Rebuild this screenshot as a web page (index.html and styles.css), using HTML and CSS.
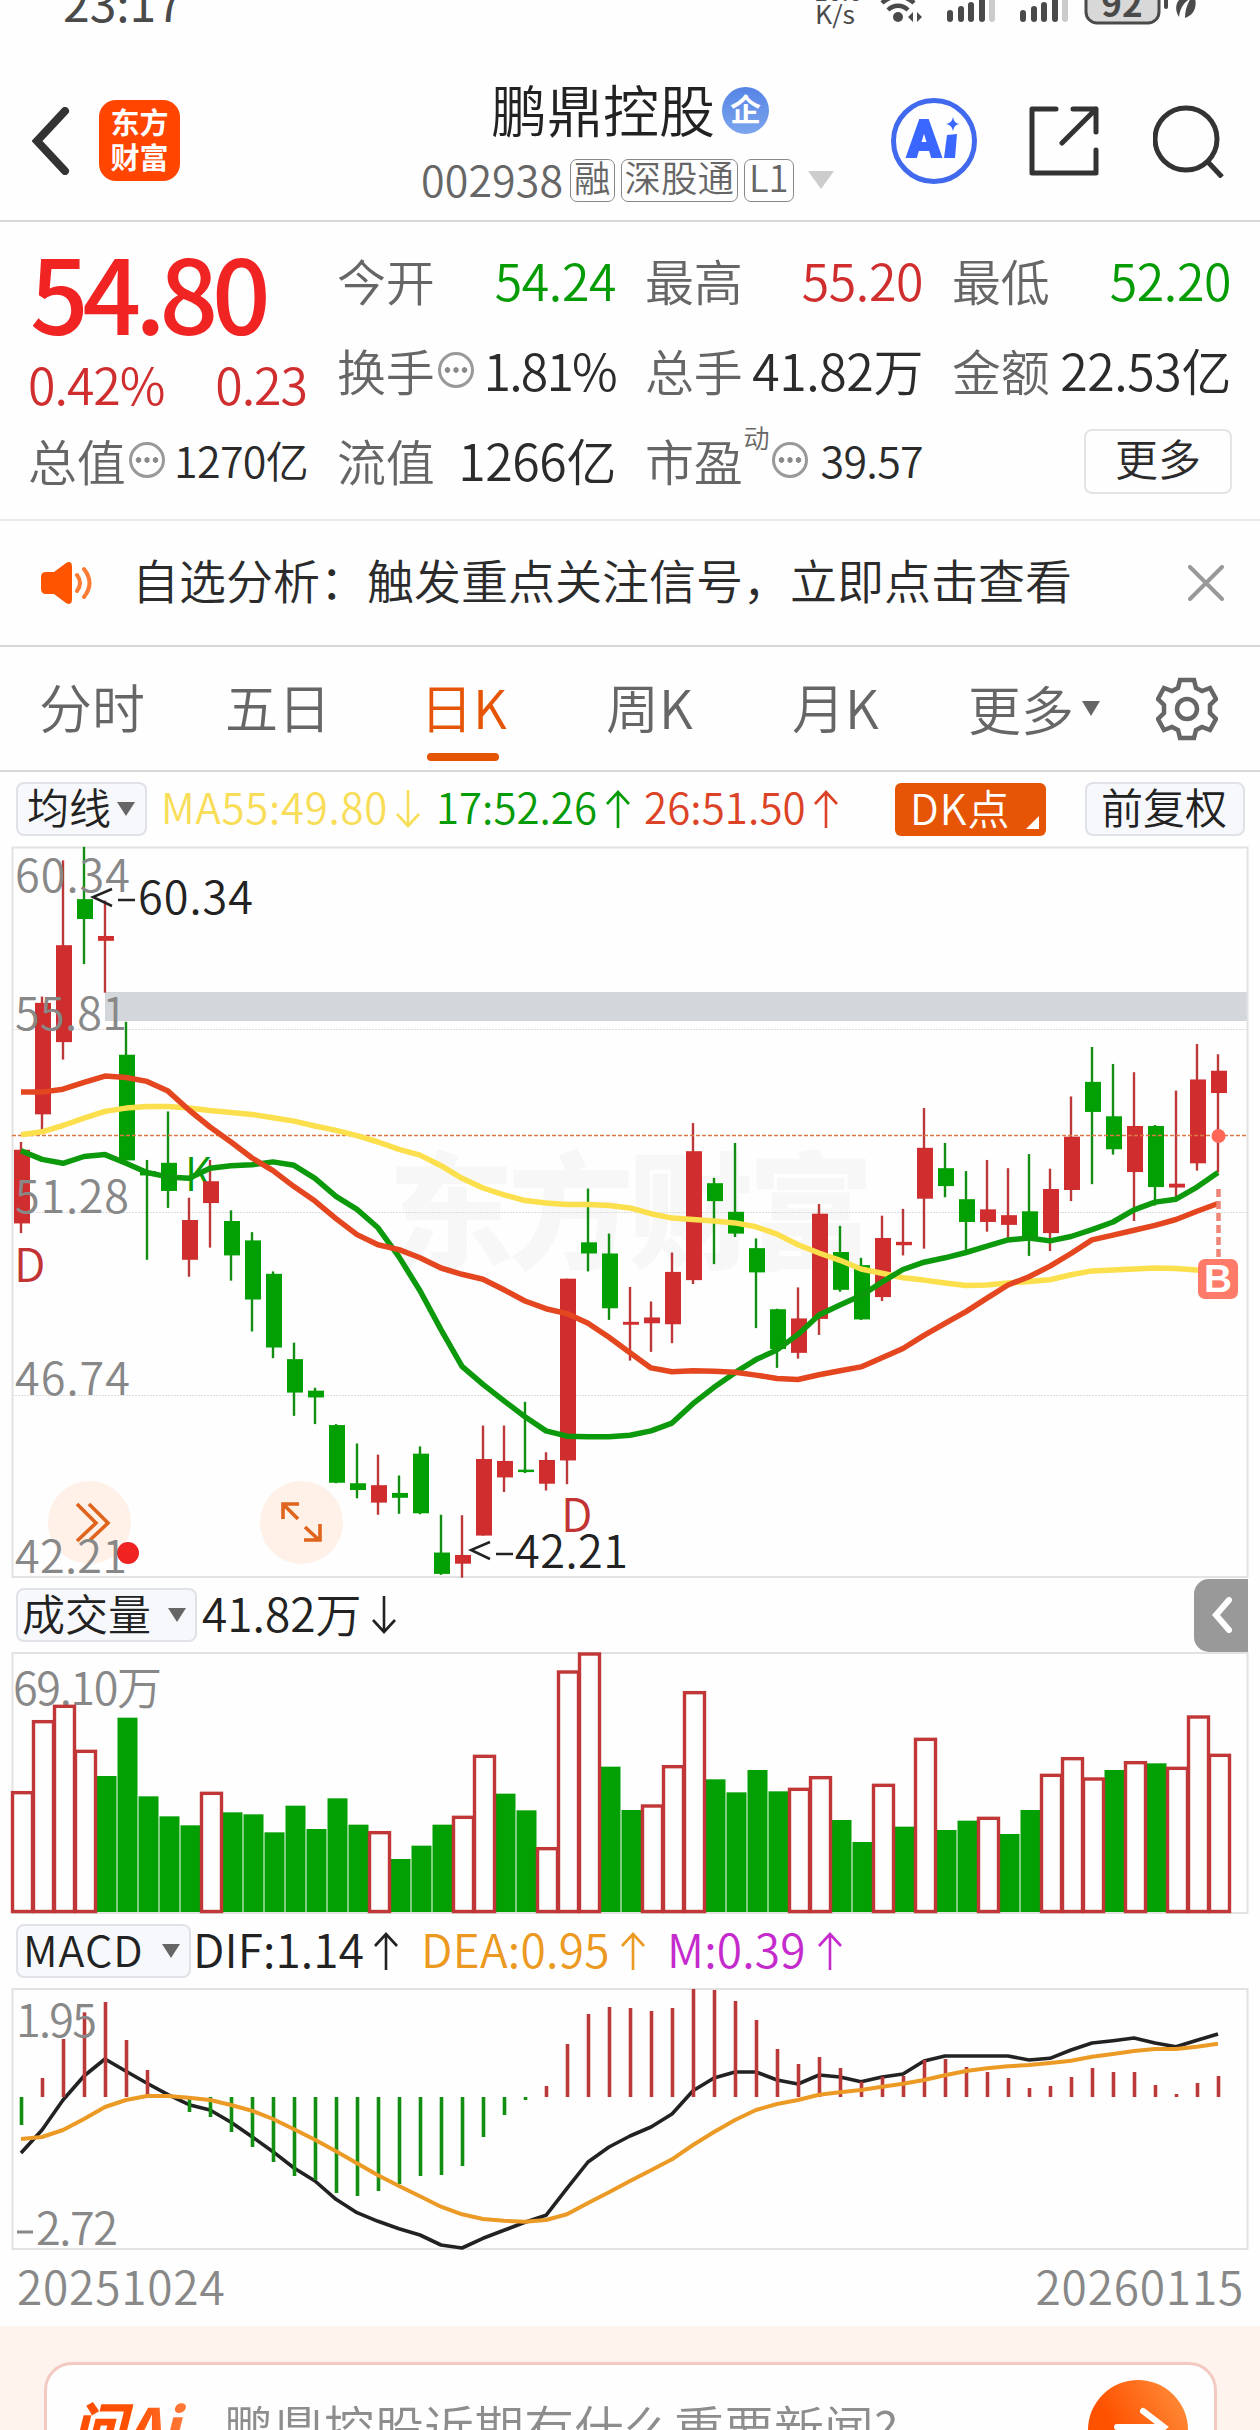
FILE: index.html
```html
<!DOCTYPE html>
<html lang="zh-CN">
<head>
<meta charset="UTF-8" />
<title>鹏鼎控股 002938</title>
<link rel="stylesheet" href="styles.css">
</head>
<body>
<div class="status-bar">
  <span class="time">23:17</span>
  <svg class="status-icons" width="400" height="30" viewBox="0 0 400 30">
    <text x="14" y="1" class="net">10.0</text>
    <text x="15" y="24" class="net" textLength="40" lengthAdjust="spacingAndGlyphs">K/s</text>
    <circle cx="98" cy="17" r="5" />
    <path d="M88 10a14 14 0 0 1 20 0M82 3a23 23 0 0 1 32 0" fill="none" stroke="#4a4a4a" stroke-width="4.5" />
    <path d="M113 12v10l-5-5zM117 12v10l5-5z" />
    <g id="signal">
      <rect x="147" y="10" width="6" height="12" rx="3" />
      <rect x="158" y="6" width="6" height="16" rx="3" />
      <rect x="168" y="2" width="6" height="20" rx="3" />
      <rect x="179" y="-4" width="6" height="26" rx="3" />
      <rect x="189" y="-8" width="6" height="30" rx="3" fill="#cbcbcb" />
    </g>
    <use href="#signal" x="73" />
    <rect x="286" y="-20" width="73" height="43" rx="11" fill="#d8d8d8" stroke="#4a4a4a" stroke-width="3" />
    <rect x="364" y="-6" width="4" height="15" rx="2" />
    <text x="322" y="17" class="battery">92</text>
    <path d="M379 17c-6-10-3-20 14-25 6 14 1 23-8 26 0-7 2-14 6-20-8 5-11 11-12 19z" />
  </svg>
</div>

<header class="header">
  <svg class="back" width="38" height="68" viewBox="0 0 38 68"><path d="M33 4L5 34l28 30" /></svg>
  <div class="logo"><span>东方</span><span>财富</span></div>
  <div class="title">
    <div class="name">鹏鼎控股<span class="badge">企</span></div>
    <div class="code">
      <span class="num">002938</span>
      <span class="tag">融</span>
      <span class="tag">深股通</span>
      <span class="tag l1">L1</span>
      <svg class="more-arrow" width="26" height="18" viewBox="0 0 26 18"><path d="M0 0h26L13 18z" /></svg>
    </div>
  </div>
  <svg class="ai" width="86" height="86" viewBox="0 0 86 86">
    <circle cx="43" cy="43" r="40.5" />
    <text x="16" y="59" textLength="34" lengthAdjust="spacingAndGlyphs">A</text>
    <path d="M56 37l10-1-2 24H53zM62 19q1 6 6 7-5 1-6 7-1-6-7-7 6-1 7-7z" />
  </svg>
  <svg class="share" width="70" height="70" viewBox="0 0 70 70"><path d="M27 3H3v64h64V44M44 3h23v23M67 3L33 37" /></svg>
  <svg class="search" width="72" height="74" viewBox="0 0 72 74"><circle cx="33" cy="35" r="31" /><path d="M55 58l14 15" /></svg>
</header>

<section class="quote">
  <div class="quote-main">
    <div class="price">54.80</div>
    <div class="change"><span>0.42%</span><span>0.23</span></div>
  </div>
  <div class="cell"><label>今开</label><b class="down">54.24</b></div>
  <div class="cell"><label>最高</label><b class="up">55.20</b></div>
  <div class="cell"><label>最低</label><b class="down">52.20</b></div>
  <div class="cell"><label>换手<i class="tip"></i></label><b class="rate">1.81%</b></div>
  <div class="cell"><label>总手</label><b>41.82万</b></div>
  <div class="cell"><label>金额</label><b>22.53亿</b></div>
  <div class="cell"><label>总值<i class="tip"></i></label><b class="small">1270亿</b></div>
  <div class="cell"><label>流值</label><b>1266亿</b></div>
  <div class="cell"><label>市盈<sup>动</sup><i class="tip"></i></label><b class="small">39.57</b></div>
  <div class="cell"><button class="more-btn">更多</button></div>
</section>

<section class="notice">
  <svg width="54" height="44" viewBox="0 0 54 44">
    <path d="M6 11h8L26 2q6-3 6 4v32q0 7-6 4L14 33H6q-5 0-5-5V16q0-5 5-5z" fill="#ff5500" />
    <path d="M37 14q6 8 0 16M44 8q11 14 0 28" fill="none" stroke="#ff7a33" stroke-width="4" stroke-linecap="round" />
  </svg>
  <span>自选分析：触发重点关注信号，立即点击查看</span>
  <svg class="close" width="36" height="36" viewBox="0 0 36 36"><path d="M2 2l32 32M34 2L2 34" /></svg>
</section>

<nav class="tabs">
  <a class="t1">分时</a>
  <a class="t2">五日</a>
  <a class="t3 active">日K</a>
  <a class="t4">周K</a>
  <a class="t5">月K</a>
  <a class="t6">更多<svg width="18" height="15" viewBox="0 0 18 15"><path d="M0 0h18L9 15z" fill="#666" /></svg></a>
  <svg class="gear" width="62" height="64" viewBox="0 0 62 64">
    <path d="M24 3h14l2 8 6 3 8-3 6 11-6 6v8l6 6-6 11-8-3-6 3-2 8H24l-2-8-6-3-8 3-6-11 6-6v-8l-6-6 6-11 8 3 6-3z" />
    <circle cx="31" cy="32" r="10" />
  </svg>
</nav>

<div class="bar ma-bar">
  <button class="pick ma-pick">均线<i class="tri"></i></button>
  <span class="val ma55"><em>MA55:49.80</em><svg class="arr dn"><use href="#arrow" /></svg></span>
  <span class="val ma17"><em>17:52.26</em><svg class="arr"><use href="#arrow" /></svg></span>
  <span class="val ma26"><em>26:51.50</em><svg class="arr"><use href="#arrow" /></svg></span>
  <button class="dk">DK点</button>
  <button class="pick adj">前复权</button>
</div>

<svg class="chart" id="kline" width="1260" height="732" viewBox="0 0 1260 732">
  <text x="388" y="413" class="watermark" textLength="486">东方财富</text>
  <path d="M12 183.5h1235M12 366.5h1235M12 549.5h1235" class="grid" />
  <rect x="105" y="146" width="1142" height="29" fill="#d3d6db" />
  <rect x="12.5" y="1.5" width="1235" height="729.5" class="frame" />
  <text x="185" y="345" class="kmark" textLength="27" lengthAdjust="spacingAndGlyphs">K</text>
  <g id="candles"></g>
  <path d="M12 289.5h1235" stroke="#dd7744" stroke-width="1.5" stroke-dasharray="4 2" />
  <g id="maLines"></g>
  <circle cx="89.5" cy="676.5" r="41.5" fill="#fff0e8" />
  <path d="M77 658l19 19-19 18M89 658l19 19-19 18" class="tool" />
  <circle cx="301.5" cy="676.5" r="41.5" fill="#fff0e8" />
  <path d="M283 673v-15h16M284 659l14 14M320 678v16h-16M305 681l14 13" class="tool" />
  <circle cx="128" cy="707" r="11" fill="#f02222" />
  <g class="axis">
    <text x="15" y="46" textLength="115">60.34</text>
    <text x="15" y="184" textLength="112">55.81</text>
    <text x="15" y="367" textLength="114">51.28</text>
    <text x="15" y="549" textLength="115">46.74</text>
    <text x="15" y="727" textLength="112">42.21</text>
  </g>
  <g class="mark">
    <path d="M112 43l-19 8 19 9M118 54h17M490 696l-19 8 19 9M496 708h17" />
    <text x="138" y="68" textLength="115">60.34</text>
    <text x="515" y="722" textLength="113">42.21</text>
  </g>
  <text x="14" y="436" class="dmark">D</text>
  <text x="561" y="686" class="dmark">D</text>
  <path d="M1218.5 343v69" stroke="#ee8577" stroke-width="4.5" stroke-dasharray="8 4" />
  <circle cx="1218.5" cy="290" r="7" fill="#ff6655" />
  <rect x="1198" y="413" width="40" height="40" rx="7" fill="#ff7b69" />
  <text x="1218" y="446" class="bmark" textLength="28" lengthAdjust="spacingAndGlyphs">B</text>
</svg>

<div class="bar vol-bar">
  <button class="pick vol-pick">成交量<i class="tri"></i></button>
  <span class="val v1"><em>41.82万</em><svg class="arr dn"><use href="#arrow" /></svg></span>
  <button class="fold"><svg width="20" height="36" viewBox="0 0 20 36"><path d="M17 3L4 18l13 15" /></svg></button>
</div>

<svg class="chart" width="1260" height="262" viewBox="0 0 1260 262">
  <rect x="12.5" y="1" width="1235" height="260" class="frame" />
  <text x="13" y="53" class="axis" textLength="149">69.10万</text>
  <g id="volume"></g>
</svg>

<div class="bar macd-bar">
  <button class="pick macd-pick"><em>MACD</em><i class="tri"></i></button>
  <span class="val dif"><em>DIF:1.14</em><svg class="arr"><use href="#arrow" /></svg></span>
  <span class="val dea"><em>DEA:0.95</em><svg class="arr"><use href="#arrow" /></svg></span>
  <span class="val m"><em>M:0.39</em><svg class="arr"><use href="#arrow" /></svg></span>
</div>

<svg class="chart" width="1260" height="262" viewBox="0 0 1260 262">
  <rect x="12.5" y="1" width="1235" height="260" class="frame" />
  <g id="macd"></g>
  <g class="axis">
    <text x="16" y="49" textLength="81">1.95</text>
    <path d="M17 244h16" />
    <text x="36" y="257" textLength="82">2.72</text>
  </g>
</svg>

<div class="dates"><span>20251024</span><span>20260115</span></div>

<footer class="ask">
  <div class="ask-box">
    <span class="ask-logo">问Ai</span>
    <span class="ask-text">鹏鼎控股近期有什么重要新闻?</span>
    <span class="ask-go"><svg width="60" height="60" viewBox="0 0 60 60"><path d="M5 28h46M31 12l21 16-21 16" /></svg></span>
  </div>
</footer>

<svg class="defs" width="0" height="0">
  <symbol id="arrow" viewBox="0 0 24 38"><path d="M12 38V2M1 14L12 2l11 12" fill="none" stroke="currentColor" stroke-width="2.6" /></symbol>
</svg>
<script src="script.js"></script>
</body>
</html>
```
FILE: styles.css
```css
:root {
  --red: #d02e2e;
  --green: #049b04;
  --orange: #e65505;
  --text: #2b2b2b;
  --gray: #666;
  --line: #d8d8d8;
}
* { box-sizing: border-box; }
body {
  margin: 0;
  width: 1260px;
  height: 2430px;
  overflow: hidden;
  background: #fefefe;
  color: var(--text);
  font-family: "Noto Sans CJK SC", "Noto Sans", sans-serif;
  font-weight: 350;
  line-height: 1;
}
button {
  font: inherit;
  color: inherit;
  padding: 0;
  border: none;
  background: none;
}
em, i { font-style: normal; }
svg { display: block; flex: none; }
.defs { position: absolute; }

/* Status bar */
.status-bar {
  height: 30px;
  display: flex;
  justify-content: space-between;
  padding: 0 60px 0 63px;
  overflow: hidden;
}
.time {
  font-size: 48px;
  font-weight: 400;
  line-height: 2px;
  color: #4a4a4a;
}
.status-icons { fill: #4a4a4a; }
.net { font-size: 25px; font-weight: 400; }
.battery {
  font-size: 35px;
  font-weight: 700;
  text-anchor: middle;
}

/* Header */
.header {
  height: 192px;
  display: flex;
  align-items: center;
  padding: 31px 34px 0 32px;
  border-bottom: 2px solid var(--line);
}
.header svg {
  fill: none;
  stroke: #333;
  stroke-width: 5;
}
.header .back { stroke-width: 8; stroke-linecap: round; }
.logo {
  flex: none;
  width: 81px;
  height: 81px;
  margin-left: 29px;
  border-radius: 17px;
  background: #ff4500;
  color: #fff;
  font-size: 29px;
  font-weight: 700;
  display: flex;
  flex-direction: column;
  align-items: center;
  justify-content: center;
  gap: 6px;
  padding-bottom: 4px;
}
.title {
  flex: none;
  width: 412px;
  margin-left: 241px;
  display: flex;
  flex-direction: column;
  align-items: center;
}
.name {
  font-size: 56px;
  display: flex;
  align-items: center;
  color: #222;
  margin-left: 6px;
}
.badge {
  width: 47px;
  height: 47px;
  margin: 6px 0 0 7px;
  border-radius: 50%;
  background: linear-gradient(#5684e6, #7ba5ec);
  color: #fff;
  font-size: 31px;
  font-weight: 700;
  line-height: 42px;
  text-align: center;
}
.code {
  width: 100%;
  margin-top: 23px;
  display: flex;
  align-items: center;
  font-size: 43px;
  color: var(--gray);
  white-space: nowrap;
}
.code .num { flex: none; width: 149px; letter-spacing: .1px; line-height: 34px; padding-bottom: 4px; }
.tag {
  flex: none;
  height: 43px;
  border: 1.5px solid #888;
  border-radius: 7px;
  padding: 0 3px;
  margin-right: 6px;
  font-size: 36.5px;
  line-height: 34px;
}
.tag.l1 { padding: 0 4px; }
.header .more-arrow { fill: #ccc; stroke: none; margin-left: 8px; }
.header .ai { margin-left: 58px; stroke: #4169ee; }
.ai text, .ai path { fill: #3a67ff; stroke: none; }
.ai text {
  font: 900 52px Roboto, sans-serif;
  stroke: #3a67ff;
  stroke-width: 2;
}
.header .share { margin-left: 52px; stroke-linejoin: round; stroke-linecap: round; }
.header .search { margin-left: 54px; }

/* Quote */
.quote {
  height: 299px;
  padding: 15px 28px 0;
  display: grid;
  grid-template-columns: 279px 278px 277px 278px;
  grid-template-rows: repeat(3, 90px);
  column-gap: 30px;
  border-bottom: 2px solid #ebebeb;
}
.quote-main { grid-row: 1 / 3; }
.price {
  font-size: 103px;
  font-weight: 500;
  letter-spacing: -6.2px;
  line-height: 107px;
  padding-left: 2px;
  color: #f12424;
}
.change {
  display: flex;
  justify-content: space-between;
  font-size: 50px;
  letter-spacing: -1px;
  line-height: 50px;
  color: var(--red);
  margin: 14px 0 0;
}
.cell {
  display: flex;
  align-items: center;
  justify-content: space-between;
  padding-bottom: 6px;
  white-space: nowrap;
}
.cell label {
  display: flex;
  align-items: center;
  font-size: 49px;
  letter-spacing: -.3px;
  color: var(--gray);
}
.cell b {
  font-size: 50px;
  font-weight: 350;
  letter-spacing: -.4px;
  margin-right: -1px;
}
.cell b.rate { letter-spacing: -1.8px; }
.cell b.small { font-size: 43px; letter-spacing: -.7px; }
.cell b.up { color: var(--red); }
.cell b.down { color: var(--green); }
.cell sup {
  font-size: 26px;
  align-self: flex-start;
  margin: -11px -1px 0 1px;
}
.tip {
  width: 36px;
  height: 36px;
  margin: 1px 0 0 4px;
  border: 3px solid #999;
  border-radius: 50%;
  background: radial-gradient(circle, #888 2.5px, transparent 3px) center / 8.5px 30px repeat-x content-box;
  padding: 0 2px;
}
.more-btn {
  width: 148px;
  height: 65px;
  margin: 4px -2px 0 auto;
  border: 2px solid #e4e4e4;
  border-radius: 8px;
  font-size: 43px;
  line-height: 50px;
  padding-bottom: 8px;
}

/* Notice */
.notice {
  height: 126px;
  display: flex;
  align-items: center;
  padding: 0 36px 0 40px;
  border-bottom: 2px solid var(--line);
  font-size: 47px;
}
.notice span { margin: -9px auto 0 38px; }
.close { stroke: #999; stroke-width: 4; stroke-linecap: round; }

/* Tabs */
.tabs {
  height: 125px;
  display: grid;
  grid-template-columns: 186px 195px 186px 186px 176px 188px 62px;
  align-items: center;
  padding-left: 39px;
  border-bottom: 2px solid var(--line);
  font-size: 53px;
  color: var(--gray);
}
.tabs a {
  height: 123px;
  line-height: 119px;
}
.tabs .active { color: var(--orange); }
.tabs .active::after {
  content: "";
  display: block;
  width: 72px;
  height: 8px;
  margin-top: -13px;
  margin-left: 7px;
  border-radius: 4px;
  background: var(--orange);
}
.tabs .t6 { display: flex; align-items: center; }
.t6 svg { margin-left: 8px; }
.gear { fill: none; stroke: var(--gray); stroke-width: 4.5; }

/* Indicator bars */
.bar {
  height: 74px;
  display: flex;
  align-items: center;
  padding-left: 16px;
}
.pick {
  flex: none;
  height: 54px;
  border: 2px solid #dfe2e6;
  border-radius: 8px;
  background: #f6f8fb;
  display: flex;
  align-items: center;
  justify-content: space-between;
  line-height: 44px;
  padding-bottom: 6px;
  color: #222;
}
.tri {
  margin-top: 5px;
  border: solid transparent;
  border-width: 14px 9px 0;
  border-top-color: #666;
}
.val { display: flex; align-items: center; }
.val em { line-height: 44px; padding-bottom: 6px; white-space: nowrap; }
.arr { width: 24px; height: 38px; }
.arr.dn { transform: rotate(180deg); }
.ma-bar { font-size: 42px; }
.ma-pick { width: 131px; padding-left: 9px; padding-right: 10px; }
.ma55 { width: 275px; margin-left: 14px; color: #f8dd58; }
.ma55 em { width: 235px; letter-spacing: .7px; }
.ma17 { width: 208px; color: var(--green); }
.ma17 em { width: 170px; letter-spacing: 0; }
.ma26 { width: 251px; color: #dc4326; }
.ma26 em { width: 170px; letter-spacing: .1px; }
.dk {
  position: relative;
  width: 151px;
  height: 53px;
  margin-top: 1px;
  border-radius: 6px;
  background: var(--orange);
  color: #fff;
  text-align: left;
  padding: 0 0 6px 15px;
  letter-spacing: 1px;
  line-height: 44px;
}
.dk::after {
  content: "";
  position: absolute;
  right: 7px;
  bottom: 7px;
  border: solid transparent;
  border-width: 0 0 13px 13px;
  border-bottom-color: #fff;
}
.adj { width: 160px; margin-left: 39px; padding-left: 14px; }
.vol-bar, .macd-bar { font-size: 46px; }
.vol-pick, .macd-pick { font-size: 43px; padding-right: 9px; }
.vol-pick { width: 181px; padding-left: 4px; }
.v1 { margin-left: 5px; color: #222; }
.v1 em { width: 170px; letter-spacing: 0; }
.fold {
  width: 54px;
  height: 73px;
  margin: 0 12px 0 auto;
  border-radius: 15px 0 0 15px;
  background: #999;
  padding-left: 18px;
}
.fold path { fill: none; stroke: #fff; stroke-width: 6; stroke-linecap: round; }
.macd-pick { width: 175px; padding-left: 5px; letter-spacing: 1px; }
.dif { margin-left: 2px; width: 228px; color: #222; }
.dif em { width: 181px; letter-spacing: .1px; }
.dea { width: 246px; color: #ec9922; }
.dea em { width: 200px; letter-spacing: .3px; }
.m { color: #c52bcc; }
.m em { width: 151px; letter-spacing: .2px; }

/* Charts */
.frame { fill: none; stroke: #e2e2e2; stroke-width: 2; }
.grid { stroke: #ddd; stroke-width: 1; stroke-dasharray: 2 1; }
.axis { fill: #888; font-size: 45px; }
.axis path { stroke: #888; stroke-width: 3; }
.watermark { font-size: 126px; font-weight: 900; fill: #f7f7f7; }
.mark { fill: #222; font-size: 45px; }
.mark path { fill: none; stroke: #222; stroke-width: 2.5; }
.dmark { fill: #c23434; font-size: 46px; }
.kmark { fill: var(--green); font-size: 46px; }
.bmark { fill: #fff; font: 700 38px "Liberation Sans", sans-serif; text-anchor: middle; }
.tool { fill: none; stroke: #e0641c; stroke-width: 3.6; }
.ma { fill: none; stroke-linejoin: round; }
.body-up { fill: var(--red); }
.body-down { fill: #02a002; }
.wick-up { stroke: #bb3939; stroke-width: 2.4; }
.wick-down { stroke: #128f12; stroke-width: 2.4; }
.hist { stroke-width: 3.6; }
.vol-up { fill: none; stroke: #c13636; stroke-width: 3.4; }

.dates {
  height: 76px;
  display: flex;
  justify-content: space-between;
  padding: 12px 16px 0 17px;
  font-size: 46px;
  letter-spacing: .8px;
  color: #888;
}

/* Ask box */
.ask {
  height: 104px;
  padding: 36px 43px 0 44px;
  background: #fff3ee;
  overflow: hidden;
}
.ask-box {
  height: 140px;
  border: 3px solid #f3cac1;
  border-radius: 28px;
  background: #fefefe;
  display: flex;
  align-items: flex-start;
  padding: 15px 26px 0 25px;
}
.ask-logo {
  width: 152px;
  margin-top: 18px;
  font-size: 54px;
  font-weight: 900;
  font-style: italic;
  background: linear-gradient(90deg, #ff4f00 40%, #ff9966);
  -webkit-background-clip: text;
  background-clip: text;
  color: transparent;
}
.ask-text {
  margin-top: 21px;
  font-size: 50px;
  color: #8d8d8d;
  white-space: nowrap;
}
.ask-go {
  width: 100px;
  height: 100px;
  margin-left: auto;
  border-radius: 50%;
  background: linear-gradient(60deg, #ff5200 35%, #ff9340);
  padding: 19px 0 0 24px;
}
.ask-go path { fill: none; stroke: #fff; stroke-width: 6; stroke-linecap: round; }
```
FILE: script.js
```js
const UP = 1, DOWN = 0;
const barX = i => 21 + 21 * i;

// [direction, high, body top, body bottom, low]
const candles = [
  [1,623,639,791,811],[1,323,336,566,597],[1,42,217,417,453],[0,14,122,163,256],[1,125,198,208,315],
  [0,375,443,661,661],[0,660,683,692,866],[0,560,666,724,759],[1,738,784,866,901],[1,660,704,749,841],
  [0,764,786,857,909],[0,809,826,948,1014],[0,890,895,1047,1069],[0,1037,1071,1140,1188],[0,1130,1136,1150,1205],
  [0,1205,1207,1326,1327],[0,1245,1327,1341,1358],[1,1268,1331,1367,1392],[0,1311,1347,1357,1390],[0,1251,1266,1389,1391],
  [0,1392,1470,1514,1516],[1,1393,1475,1493,1522],[1,1208,1277,1435,1435],[1,1208,1281,1315,1345],[0,1159,1299,1304,1306],
  [1,1263,1279,1328,1342],[1,905,905,1280,1329],[0,719,830,853,890],[0,812,853,966,990],[1,922,994,1000,1074],
  [1,952,985,997,1056],[1,851,891,999,1038],[1,584,642,908,916],[0,697,708,745,875],[0,625,767,812,819],
  [0,822,842,892,1007],[0,967,968,1050,1089],[1,923,987,1058,1070],[1,751,771,988,1021],[0,796,850,928,932],
  [0,862,877,989,990],[1,775,821,943,951],[1,761,829,836,857],[1,553,635,740,843],[0,625,677,714,737],
  [0,683,741,788,848],[1,660,762,788,808],[1,677,774,794,822],[0,648,766,822,858],[1,678,720,811,848],
  [1,529,612,722,745],[0,427,499,561,710],[0,462,570,638,649],[1,479,590,685,786],[0,588,590,716,754],
  [1,517,709,717,740],[1,421,494,667,682],[1,442,476,522,686]
];

const ma = [
  { color: "#fbdf4c", data: [608,602,589,574,560,553,550,550,553,558,562,566,573,580,590,599,610,623,638,650,672,698,718,732,744,749,752,752,754,759,771,780,783,786,790,798,813,835,852,867,885,894,903,908,914,919,918,914,911,907,897,889,887,885,883,884,887,889] },
  { color: "#0c990c", data: [641,659,667,653,649,667,686,695,698,677,672,670,664,671,698,735,762,800,860,930,1010,1086,1123,1157,1190,1219,1230,1231,1231,1228,1219,1203,1163,1129,1099,1072,1052,1020,980,959,940,912,886,871,862,851,838,825,821,827,818,804,788,763,747,741,716,686] },
  { color: "#e44620", data: [520,520,514,500,487,490,498,518,557,592,623,656,682,715,745,781,814,835,845,862,883,896,906,928,951,967,977,997,1026,1058,1089,1097,1095,1096,1098,1104,1111,1113,1103,1095,1087,1068,1049,1022,997,973,945,918,901,879,853,825,815,805,795,783,766,750] }
];

// volume bar tops
const volumes = [668,455,409,544,618,443,679,739,766,670,727,733,787,707,777,685,764,788,867,827,764,742,559,671,721,836,306,252,590,720,708,590,368,628,667,600,664,658,623,750,816,646,770,508,780,752,745,792,720,616,566,627,600,578,580,595,441,556];
const volumeUp = [0,1,2,3,9,17,21,22,25,26,27,30,31,32,37,38,41,43,46,49,50,51,53,55,56,57];

const zero = 381;
const hist = [465,324,207,127,96,210,300,372,426,441,486,531,576,618,630,669,678,663,642,618,615,588,501,435,390,348,222,132,111,114,123,114,57,60,93,150,237,282,261,294,335,320,318,270,267,291,306,324,354,348,321,294,306,306,345,372,339,318];
const dif = [549,480,390,318,267,304,340,374,404,420,457,500,545,594,633,688,728,754,776,795,825,834,805,781,757,736,655,576,531,498,471,432,362,324,306,306,330,342,315,321,335,321,312,273,258,258,258,258,270,265,240,219,212,204,219,230,211,192];
const dea = [507,501,480,447,411,390,378,378,383,390,405,422,447,478,509,544,580,616,648,679,710,733,747,752,755,750,733,699,667,633,601,568,525,486,450,420,402,390,374,367,360,350,341,330,316,303,295,289,285,279,272,260,252,243,237,237,230,221];

const ky = v => v / 2.063 - 6;
const vy = v => v / 3 - 82;
const my = v => v / 3 - 18;

function polyline(data, scale, color, width) {
  const points = data.map((v, i) => `${barX(i)},${scale(v).toFixed(1)}`).join(" ");
  return `<polyline class="ma" points="${points}" stroke="${color}" stroke-width="${width}"/>`;
}

document.getElementById("candles").innerHTML = candles.map(([dir, high, top, bottom, low], i) => {
  const kind = dir === UP ? "up" : "down";
  const x = barX(i);
  return `<line class="wick-${kind}" x1="${x}" x2="${x}" y1="${ky(high)}" y2="${ky(low)}"/>` +
    `<rect class="body-${kind}" x="${x - 7}" y="${ky(top)}" width="16" height="${ky(bottom) - ky(top)}"/>`;
}).join("");

document.getElementById("maLines").innerHTML = ma.map(m => polyline(m.data, ky, m.color, 5.5)).join("");

// falling bars first so the outlined ones stay on top
const bars = volumes.map((v, i) => ({ v, x: barX(i) - 8.5, up: volumeUp.includes(i) }));
document.getElementById("volume").innerHTML =
  bars.filter(b => !b.up).map(b => `<rect class="body-down" x="${b.x}" y="${vy(b.v)}" width="20" height="${260 - vy(b.v)}"/>`).join("") +
  bars.filter(b => b.up).map(b => `<rect class="vol-up" x="${b.x}" y="${vy(b.v)}" width="20" height="${259.5 - vy(b.v)}"/>`).join("");

document.getElementById("macd").innerHTML =
  polyline(dif, my, "#222", 3.6) +
  hist.map((v, i) => `<line class="wick-${v < zero ? "up" : "down"} hist" x1="${barX(i) + .5}" x2="${barX(i) + .5}" y1="${my(zero)}" y2="${my(v)}"/>`).join("") +
  polyline(dea, my, "#ec9a26", 4);
```
